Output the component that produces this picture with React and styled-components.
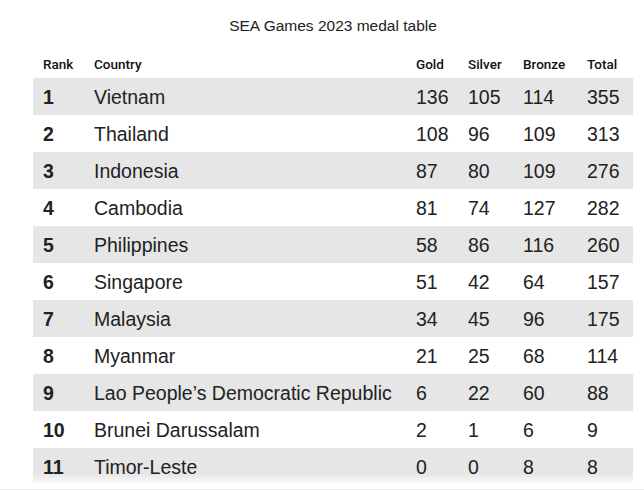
import React from "react";
import styled, { createGlobalStyle } from "styled-components";

const GlobalStyle = createGlobalStyle`
	html, body {
		margin: 0;
		padding: 0;
		background: #ffffff;
	}
	body {
		font-family: "Liberation Sans", Arial, sans-serif;
		color: #222222;
	}
`;

const Frame = styled.div`
	position: relative;
	width: 644px;
	height: 490px;
	overflow: hidden;
	background: #ffffff;
`;

const Wrapper = styled.div`
	width: 600px;
	margin-left: 33px;
	padding-top: 17px;
`;

const Title = styled.h2`
	margin: 0 0 18px;
	font-size: 15.5px;
	font-weight: 400;
	line-height: 18px;
	text-align: center;
	color: #222222;
`;

const Table = styled.table`
	width: 600px;
	border-collapse: collapse;
	table-layout: fixed;
`;

const HeadCell = styled.th`
	height: 22px;
	padding: 3px 0 0 ${(p) => p.$pad || 0}px;
	font-family: Roboto, "Liberation Sans", sans-serif;
	font-size: 13.5px;
	font-weight: 500;
	text-align: left;
	vertical-align: top;
	line-height: 16px;
	color: #111111;
`;

const Row = styled.tr`
	background: ${(p) => (p.$striped ? "#e6e6e6" : "#ffffff")};
`;

const Cell = styled.td`
	height: 37px;
	padding: 0 0 0 ${(p) => p.$pad || 0}px;
	font-size: 19.5px;
	font-weight: ${(p) => (p.$bold ? 700 : 400)};
	line-height: 20px;
	white-space: nowrap;
	vertical-align: middle;
	color: #222222;
`;

const Fade = styled.div`
	position: absolute;
	left: 0;
	right: 0;
	bottom: 0;
	height: 16px;
	background: linear-gradient(to bottom, rgba(255, 255, 255, 0), #ffffff 70%);
	border-bottom: 1px solid #ececec;
	box-sizing: border-box;
`;

const medals = [
	[1, "Vietnam", 136, 105, 114, 355],
	[2, "Thailand", 108, 96, 109, 313],
	[3, "Indonesia", 87, 80, 109, 276],
	[4, "Cambodia", 81, 74, 127, 282],
	[5, "Philippines", 58, 86, 116, 260],
	[6, "Singapore", 51, 42, 64, 157],
	[7, "Malaysia", 34, 45, 96, 175],
	[8, "Myanmar", 21, 25, 68, 114],
	[9, "Lao People\u2019s Democratic Republic", 6, 22, 60, 88],
	[10, "Brunei Darussalam", 2, 1, 6, 9],
	[11, "Timor-Leste", 0, 0, 8, 8],
];

const App = () => {
	return (
		<Frame>
			<GlobalStyle />
			<Wrapper>
				<Title>SEA Games 2023 medal table</Title>
				<Table>
					<colgroup>
						<col style={{ width: 61 }} />
						<col style={{ width: 322 }} />
						<col style={{ width: 52 }} />
						<col style={{ width: 55 }} />
						<col style={{ width: 64 }} />
						<col style={{ width: 46 }} />
					</colgroup>
					<thead>
						<tr>
							<HeadCell $pad={10}>Rank</HeadCell>
							<HeadCell>Country</HeadCell>
							<HeadCell>Gold</HeadCell>
							<HeadCell>Silver</HeadCell>
							<HeadCell>Bronze</HeadCell>
							<HeadCell>Total</HeadCell>
						</tr>
					</thead>
					<tbody>
						{medals.map(([rank, country, gold, silver, bronze, total]) => (
							<Row key={rank} $striped={rank % 2 === 1}>
								<Cell $pad={10} $bold>
									{rank}
								</Cell>
								<Cell>{country}</Cell>
								<Cell>{gold}</Cell>
								<Cell>{silver}</Cell>
								<Cell>{bronze}</Cell>
								<Cell>{total}</Cell>
							</Row>
						))}
					</tbody>
				</Table>
			</Wrapper>
			<Fade />
		</Frame>
	);
};

export default App;
